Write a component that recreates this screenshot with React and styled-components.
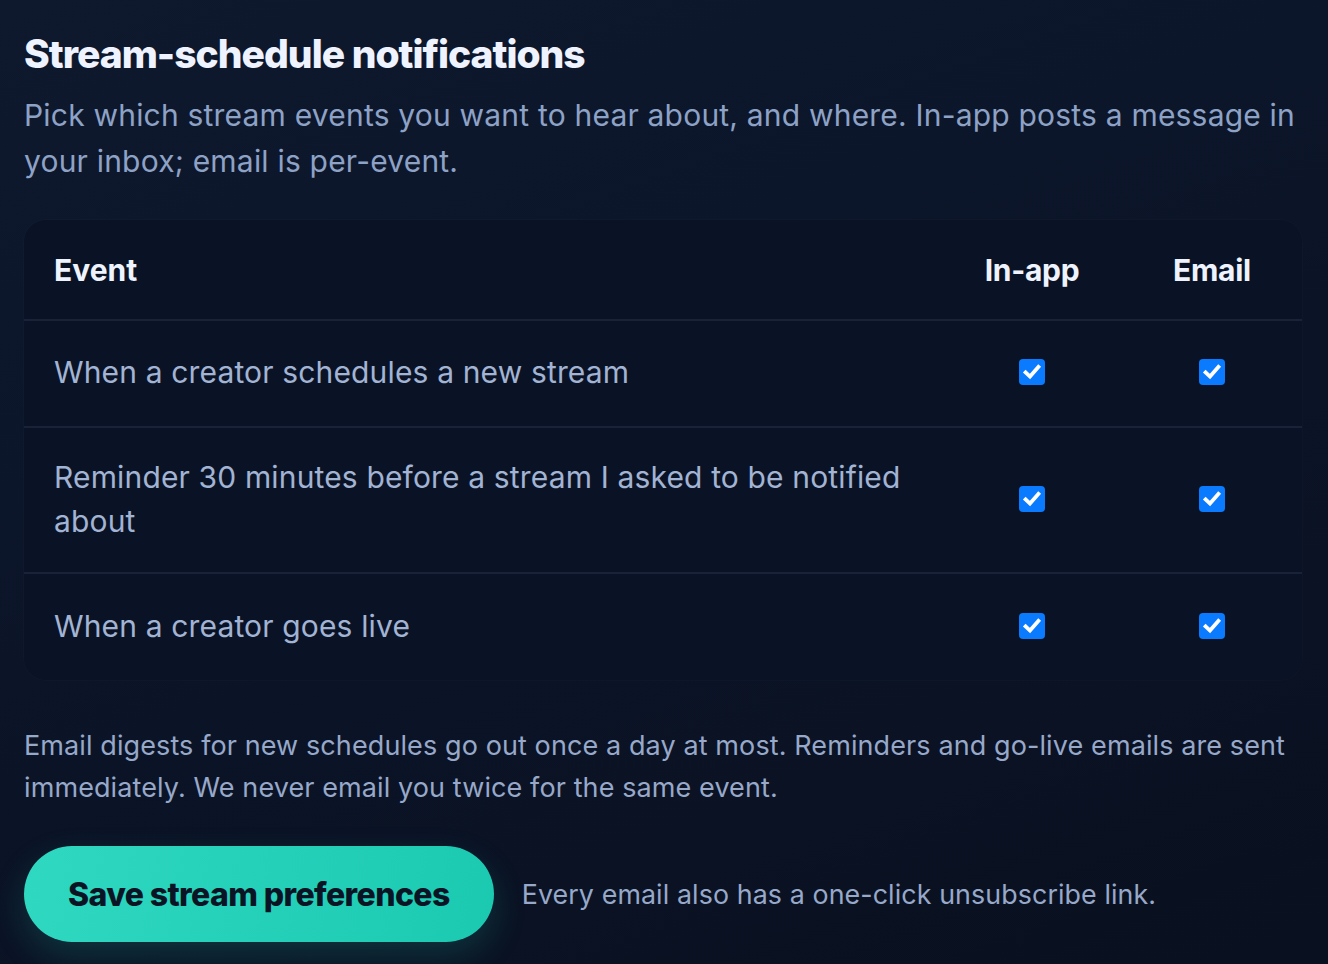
import React from "react";
import styled, { createGlobalStyle } from "styled-components";

const Global = createGlobalStyle`
  html, body { margin: 0; padding: 0; }
  body {
    min-height: 964px;
    background: linear-gradient(160deg, #0e192e 0%, #0b1427 55%, #09101f 100%);
    font-family: Inter, "Noto Sans", sans-serif;
    -webkit-font-smoothing: antialiased;
  }
`;

const Page = styled.main`
  padding: 32px 26px 0 24px;
  display: flex;
  flex-direction: column;
`;

const Title = styled.h1`
  margin: 0;
  font-size: 39px;
  line-height: 44px;
  font-weight: 800;
  letter-spacing: -1px;
  color: #eef3ff;
`;

const Lead = styled.p`
  margin: 16px 0 0;
  font-size: 30px;
  line-height: 46px;
  color: #8ea2c6;
  letter-spacing: 0.2px;
`;

const Card = styled.section`
  margin-top: 36px;
  background: #0a1325;
  border-radius: 22px;
  box-shadow: 0 0 0 1px rgba(255, 255, 255, 0.015);
  overflow: hidden;
`;

const Row = styled.div`
  display: grid;
  grid-template-columns: 1fr 180px 180px;
  align-items: center;
  border-top: ${(p) => (p.$first ? "none" : "2px solid #18233a")};
  padding: ${(p) => (p.$head ? "28px 0 27px" : p.$pad || "30px 0")};
`;

const HeadCell = styled.div`
  font-size: 30px;
  line-height: 44px;
  font-weight: 700;
  color: #eef3ff;
  padding: ${(p) => (p.$left ? "0 30px" : "0")};
  text-align: ${(p) => (p.$left ? "left" : "center")};
  letter-spacing: ${(p) => (p.$left ? "0" : "-0.3px")};
`;

const EventCell = styled.div`
  font-size: 30px;
  line-height: 44px;
  color: #a2b3d3;
  padding: 0 30px;
  letter-spacing: 0.15px;
`;

const BoxCell = styled.div`
  display: flex;
  justify-content: center;
  align-items: center;
`;

const Box = styled.span`
  width: 26px;
  height: 26px;
  border-radius: 4px;
  background: #0a7aff;
  display: inline-flex;
  align-items: center;
  justify-content: center;
`;

const Check = () => (
  <Box role="checkbox" aria-checked="true">
    <svg width="20" height="20" viewBox="0 0 20 20">
      <path
        d="M3.6 10.4 L8 14.6 L16.4 5"
        fill="none"
        stroke="#ffffff"
        strokeWidth="3.8"
        strokeLinecap="square"
        strokeLinejoin="miter"
      />
    </svg>
  </Box>
);

const Note = styled.p`
  margin: 45px 0 0;
  font-size: 27px;
  line-height: 42px;
  color: #97a8c9;
  letter-spacing: 0.1px;
`;

const Actions = styled.div`
  margin-top: 37px;
  display: flex;
  align-items: center;
  gap: 28px;
`;

const SaveButton = styled.button`
  height: 96px;
  padding: 0 44px;
  border: none;
  border-radius: 48px;
  background: linear-gradient(100deg, #2fd8c1 0%, #1bc9b1 100%);
  box-shadow: 0 14px 34px rgba(32, 200, 176, 0.18);
  font-family: Inter, "Noto Sans", sans-serif;
  font-size: 32px;
  font-weight: 800;
  letter-spacing: -0.6px;
  color: #0a1424;
  cursor: pointer;
`;

const Small = styled.span`
  font-size: 26.8px;
  color: #97a8c9;
  letter-spacing: 0.1px;
`;

const events = [
  { text: "When a creator schedules a new stream", pad: "29px 0 32px" },
  { text: "Reminder 30 minutes before a stream I asked to be notified about", pad: "27px 0 29px" },
  { text: "When a creator goes live", pad: "30px 0 32px" },
];

export default function App() {
  return (
    <>
      <Global />
      <Page>
        <Title>Stream-schedule notifications</Title>
        <Lead>
          Pick which stream events you want to hear about, and where. In-app posts a message in
          your inbox; email is per-event.
        </Lead>
        <Card>
          <Row $head $first>
            <HeadCell $left>Event</HeadCell>
            <HeadCell>In-app</HeadCell>
            <HeadCell>Email</HeadCell>
          </Row>
          {events.map((e) => (
            <Row key={e.text} $pad={e.pad}>
              <EventCell>{e.text}</EventCell>
              <BoxCell>
                <Check />
              </BoxCell>
              <BoxCell>
                <Check />
              </BoxCell>
            </Row>
          ))}
        </Card>
        <Note>
          Email digests for new schedules go out once a day at most. Reminders and go-live emails are sent
          immediately. We never email you twice for the same event.
        </Note>
        <Actions>
          <SaveButton>Save stream preferences</SaveButton>
          <Small>Every email also has a one-click unsubscribe link.</Small>
        </Actions>
      </Page>
    </>
  );
}
